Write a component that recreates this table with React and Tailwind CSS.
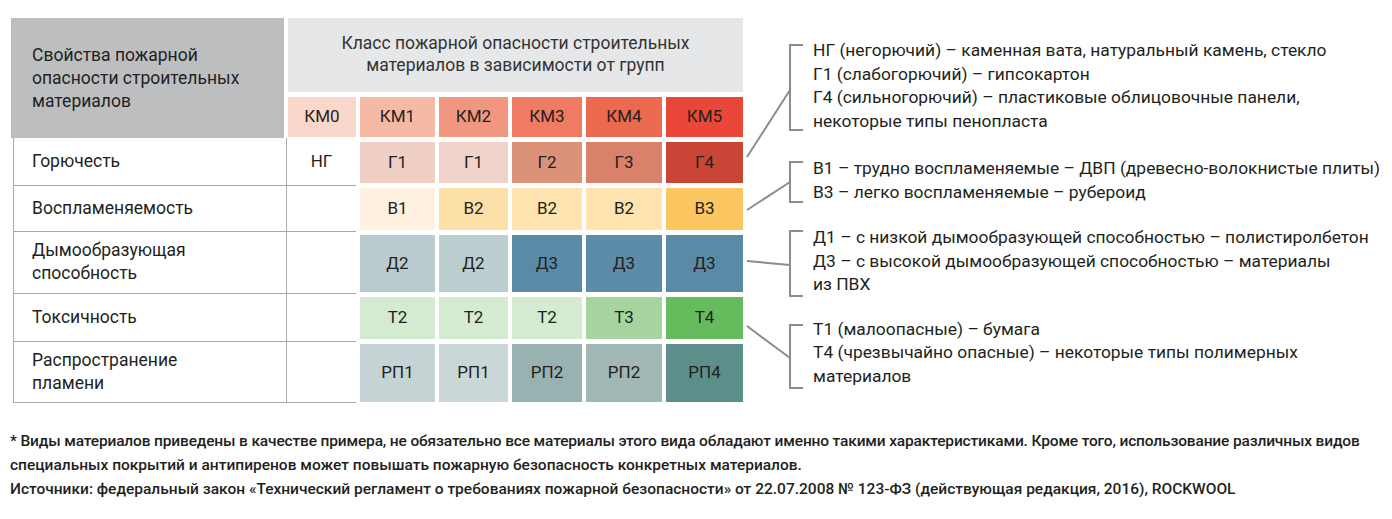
const kmHeads = [
  { label: 'КМ0', w: 'w-[68px]', bg: 'bg-[#f9d8cb]' },
  { label: 'КМ1', w: 'w-[75px]', bg: 'bg-[#f6b9a4]' },
  { label: 'КМ2', w: 'w-[69px]', bg: 'bg-[#f2977f]' },
  { label: 'КМ3', w: 'w-[70px]', bg: 'bg-[#ee7b62]' },
  { label: 'КМ4', w: 'w-[76px]', bg: 'bg-[#eb6a4f]' },
  { label: 'КМ5', w: 'w-[77px]', bg: 'bg-[#e9473a]' },
];

const colWidths = ['w-[75px]', 'w-[69px]', 'w-[70px]', 'w-[76px]', 'w-[77px]'];

const rows = [
  {
    name: ['Горючесть'],
    km0: 'НГ',
    h: 'h-[48px]',
    ch: 'h-[41px]',
    cells: [
      ['Г1', 'bg-[#efcfc4]'],
      ['Г1', 'bg-[#f0d3c9]'],
      ['Г2', 'bg-[#dc9278]'],
      ['Г3', 'bg-[#d9816a]'],
      ['Г4', 'bg-[#c94535]'],
    ],
  },
  {
    name: ['Воспламеняемость'],
    km0: '',
    h: 'h-[46px]',
    ch: 'h-[42px]',
    cells: [
      ['В1', 'bg-[#fff1df]'],
      ['В2', 'bg-[#fde0a7]'],
      ['В2', 'bg-[#fde3ae]'],
      ['В2', 'bg-[#fde3ae]'],
      ['В3', 'bg-[#fcc660]'],
    ],
  },
  {
    name: ['Дымообразующая', 'способность'],
    km0: '',
    h: 'h-[62px]',
    ch: 'h-[57px]',
    cells: [
      ['Д2', 'bg-[#b9cbce]'],
      ['Д2', 'bg-[#bdced1]'],
      ['Д3', 'bg-[#5b8aa7]'],
      ['Д3', 'bg-[#5c8ca9]'],
      ['Д3', 'bg-[#5b8aa7]'],
    ],
  },
  {
    name: ['Токсичность'],
    km0: '',
    h: 'h-[48px]',
    ch: 'h-[42px]',
    cells: [
      ['Т2', 'bg-[#d4ebd2]'],
      ['Т2', 'bg-[#d4ebd2]'],
      ['Т2', 'bg-[#d4ebd2]'],
      ['Т3', 'bg-[#a6d49e]'],
      ['Т4', 'bg-[#66bb5d]'],
    ],
  },
  {
    name: ['Распространение', 'пламени'],
    km0: '',
    h: 'h-[61px]',
    ch: 'h-[58px]',
    cells: [
      ['РП1', 'bg-[#c5d3d4]'],
      ['РП1', 'bg-[#c9d7d7]'],
      ['РП2', 'bg-[#98b1b1]'],
      ['РП2', 'bg-[#a0b7b6]'],
      ['РП4', 'bg-[#5c8f8a]'],
    ],
  },
];

const notes = [
  {
    mt: 'mt-[21px]',
    lines: [
      'НГ (негорючий) – каменная вата, натуральный камень, стекло',
      'Г1 (слабогорючий) – гипсокартон',
      'Г4 (сильногорючий) – пластиковые облицовочные панели,',
      'некоторые типы пенопласта',
    ],
  },
  {
    mt: 'mt-[24px]',
    lines: [
      'В1 – трудно воспламеняемые – ДВП (древесно-волокнистые плиты)',
      'В3 – легко воспламеняемые – рубероид',
    ],
  },
  {
    mt: 'mt-[22px]',
    lines: [
      'Д1 – с низкой дымообразующей способностью – полистиролбетон',
      'Д3 – с высокой дымообразующей способностью – материалы',
      'из ПВХ',
    ],
  },
  {
    mt: 'mt-[21px]',
    lines: [
      'Т1 (малоопасные) – бумага',
      'Т4 (чрезвычайно опасные) – некоторые типы полимерных',
      'материалов',
    ],
  },
];

const Connectors = () => (
  <svg width="70" height="385" className="shrink-0" fill="none" stroke="#8a8c8e" strokeWidth="2">
    <path d="M60 27 H47 V112 H60" />
    <path d="M47 72 L4 139" />
    <path d="M60 144 H47 V184 H60" />
    <path d="M47 164 L4 192" />
    <path d="M60 213 H47 V278 H60" />
    <path d="M4 243 L47 247" />
    <path d="M60 307 H47 V370 H60" />
    <path d="M4 308 L47 340" />
  </svg>
);

export default function App() {
  return (
    <div className="w-[1392px] h-[519px] bg-white text-[#231f20] overflow-hidden font-['Roboto',sans-serif]">
      <div className="flex items-start pt-[18px]">
        {/* table */}
        <div className="flex flex-col w-[743px] shrink-0">
          <div className="flex pl-[11px] gap-[4px]">
            <div className="w-[273px] h-[120px] bg-[#bcbec0] pl-[21px] flex items-center text-[17.5px] leading-[23px]">
              <div>
                Свойства пожарной
                <br />
                опасности строительных
                <br />
                материалов
              </div>
            </div>
            <div className="flex flex-col gap-[5px]">
              <div className="w-[455px] h-[74px] bg-[#e6e7e8] flex items-center justify-center text-center text-[17.5px] leading-[22px] text-[#333]">
                <div className="pb-[3px]">
                  Класс пожарной опасности строительных
                  <br />
                  материалов в зависимости от групп
                </div>
              </div>
              <div className="flex gap-[4px]">
                {kmHeads.map((k) => (
                  <div key={k.label} className={`${k.w} ${k.bg} h-[40px] flex items-center justify-center text-[17px]`}>
                    {k.label}
                  </div>
                ))}
              </div>
            </div>
          </div>

          <div className="flex pl-[13px] gap-[4px]">
            <div className="w-[343px] flex flex-col">
              {rows.map((r, i) => (
                <div key={i} className={`${r.h} flex border-b-[1.5px] border-[#a7a9ac]`}>
                  <div className="w-[274px] border-l-[1.5px] border-r-[1.5px] border-[#a7a9ac] pl-[18px] pb-[1px] flex items-center text-[17.5px] leading-[23px]">
                    <div>
                      {r.name.map((n) => (
                        <div key={n}>{n}</div>
                      ))}
                    </div>
                  </div>
                  <div className="flex-1 flex items-center justify-center text-[17px]">{r.km0}</div>
                </div>
              ))}
            </div>
            <div className="flex flex-col gap-[5px] pt-[4px]">
              {rows.map((r, i) => (
                <div key={i} className="flex gap-[4px]">
                  {r.cells.map(([t, bg], j) => (
                    <div key={j} className={`${colWidths[j]} ${r.ch} ${bg} flex items-center justify-center text-[17px]`}>
                      {t}
                    </div>
                  ))}
                </div>
              ))}
            </div>
          </div>
        </div>

        <Connectors />

        {/* notes */}
        <div className="flex flex-col text-[17.4px] leading-[23.5px] whitespace-nowrap">
          {notes.map((n, i) => (
            <div key={i} className={n.mt}>
              {n.lines.map((l) => (
                <div key={l}>{l}</div>
              ))}
            </div>
          ))}
        </div>
      </div>

      <div className="mt-[26px] pl-[10px] text-[15.5px] leading-[24px] font-medium whitespace-nowrap">
        <div className="tracking-[-0.01em]">
          * Виды материалов приведены в качестве примера, не обязательно все материалы этого вида обладают именно такими характеристиками. Кроме того, использование различных видов
        </div>
        <div>специальных покрытий и антипиренов может повышать пожарную безопасность конкретных материалов.</div>
        <div>
          Источники: федеральный закон «Технический регламент о требованиях пожарной безопасности» от 22.07.2008 № 123-ФЗ (действующая редакция, 2016), ROCKWOOL
        </div>
      </div>
    </div>
  );
}
